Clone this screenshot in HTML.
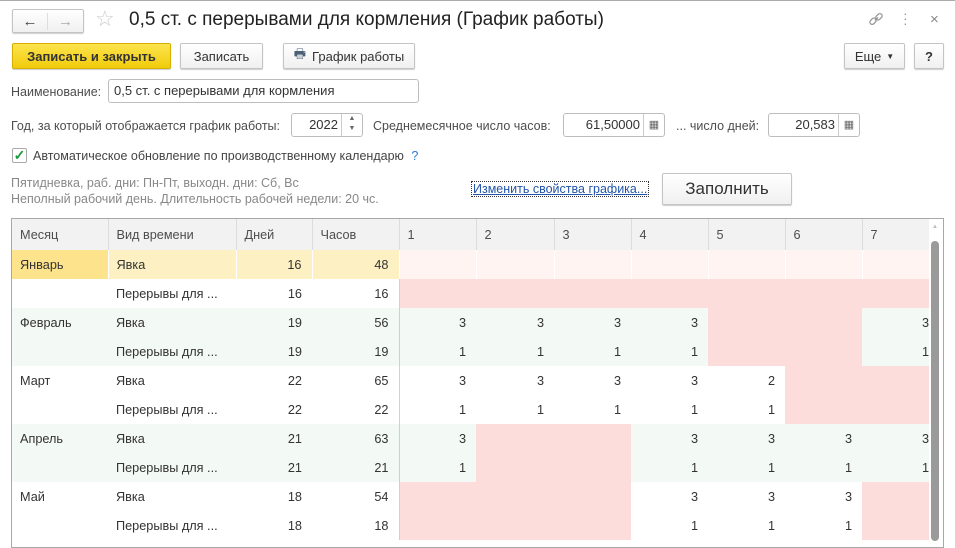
<!DOCTYPE html>
<html><head><meta charset="utf-8"><style>
*{box-sizing:border-box;margin:0;padding:0}
body{width:955px;height:535px;overflow:hidden;background:#fff;font-family:"Liberation Sans",Arial,sans-serif;color:#4d4d4d;font-size:12.5px;position:relative}
.a{position:absolute;white-space:nowrap}
.btn{position:absolute;height:26px;border:1px solid #c4c4c4;border-radius:2px;background:linear-gradient(#fff,#f0f0f0);box-shadow:0 1px 1px rgba(0,0,0,.2);display:flex;align-items:center;justify-content:center;color:#333;font-size:13px}
.inp{position:absolute;height:24px;border:1px solid #bdbdbd;border-radius:3px;background:#fff;color:#333;font-size:13px;line-height:22px}
table{position:absolute;left:12px;top:219px;border-collapse:collapse;table-layout:fixed;font-size:12.7px;color:#333}
td{height:29px;padding:0 8px;white-space:nowrap;overflow:hidden}
th{height:31px;background:#f2f2f2;font-weight:normal;text-align:left;padding:0 8px;border-right:1px solid #dcdcdc;color:#4d4d4d}
.r{text-align:right;padding-right:10px}
.l7{text-align:right;padding-right:0}
.G td{background:#f3f9f5}
.P{background:#fddcdc!important}
.LP{background:#fff4f2!important;border-right:1px solid #fff}
.Y{background:#fdf1c3!important;border-right:1px solid #fff}
.YM{background:#fde38c!important;border-right:1px solid #fff}
.d{border-left:1px solid #d0d0d0}
</style></head><body>
<div class="a" style="left:0;top:0;width:955px;height:1px;background:#aaa"></div>
<div class="btn" style="left:12px;top:9px;width:72px;height:24px;padding:0"><span style="width:35px;text-align:center;font-size:15px;color:#444;border-right:1px solid #ddd">&#8592;</span><span style="width:35px;text-align:center;font-size:15px;color:#aaa">&#8594;</span></div>
<div class="a" style="left:95px;top:6px;font-size:22px;color:#ccc">☆</div>
<div class="a" style="left:129px;top:9px;font-size:19px;color:#222">0,5 ст. с перерывами для кормления (График работы)</div>
<svg class="a" style="left:868px;top:11px" width="16" height="16" viewBox="0 0 16 16" fill="none" stroke="#999" stroke-width="1.3"><path d="M7 9.5l3-3"/><rect x="1.5" y="8" width="7" height="4.5" rx="2.2" transform="rotate(-45 5 10.2)"/><rect x="7.5" y="3.5" width="7" height="4.5" rx="2.2" transform="rotate(-45 11 5.8)"/></svg>
<div class="a" style="left:903px;top:11px;font-size:14px;color:#999;line-height:5px">·<br>·<br>·</div>
<div class="a" style="left:930px;top:11px;font-size:15px;color:#888">×</div>
<div class="btn" style="left:12px;top:43px;width:159px;background:linear-gradient(#fce44d,#f1cc0b);border-color:#d5b000;font-weight:bold;color:#333">Записать и закрыть</div>
<div class="btn" style="left:180px;top:43px;width:83px">Записать</div>
<div class="btn" style="left:283px;top:43px;width:132px"><span style="color:#4a6075;margin-right:6px">&#128438;</span>График работы</div>
<div class="btn" style="left:844px;top:43px;width:61px">Еще <span style="font-size:8px;margin-left:5px">▼</span></div>
<div class="btn" style="left:914px;top:43px;width:30px;font-weight:bold">?</div>
<div class="a" style="left:11px;top:85px">Наименование:</div>
<div class="inp" style="left:108px;top:79px;width:311px;padding-left:5px">0,5 ст. с перерывами для кормления</div>
<div class="a" style="left:11px;top:119px">Год, за который отображается график работы:</div>
<div class="inp" style="left:291px;top:113px;width:72px;text-align:right;padding-right:24px">2022<span style="position:absolute;right:0;top:0;width:21px;height:22px;border-left:1px solid #ccc;font-size:7px;line-height:10px;text-align:center;color:#666">▲<br>▼</span></div>
<div class="a" style="left:373px;top:119px">Среднемесячное число часов:</div>
<div class="inp" style="left:563px;top:113px;width:102px;text-align:right;padding-right:24px">61,50000<span style="position:absolute;right:0;top:0;width:21px;height:22px;border-left:1px solid #ccc;font-size:11px;text-align:center;color:#666">▦</span></div>
<div class="a" style="left:676px;top:119px">... число дней:</div>
<div class="inp" style="left:768px;top:113px;width:92px;text-align:right;padding-right:24px">20,583<span style="position:absolute;right:0;top:0;width:21px;height:22px;border-left:1px solid #ccc;font-size:11px;text-align:center;color:#666">▦</span></div>
<div class="a" style="left:12px;top:148px;width:15px;height:15px;border:1px solid #aaa;border-radius:2px;background:#fff;color:#1a9a3a;font-weight:bold;font-size:14px;line-height:13px;text-align:center">✓</div>
<div class="a" style="left:33px;top:149px;color:#444">Автоматическое обновление по производственному календарю <span style="color:#2b7bd6;margin-left:4px">?</span></div>
<div class="a" style="left:11px;top:175px;color:#888;line-height:16px">Пятидневка, раб. дни: Пн-Пт, выходн. дни: Сб, Вс<br>Неполный рабочий день. Длительность рабочей недели: 20 чс.</div>
<div class="a" style="left:472px;top:182px;color:#2255aa;text-decoration:underline;outline:1px dotted #333;padding:0 1px">Изменить свойства графика...</div>
<div class="btn" style="left:662px;top:173px;width:130px;height:32px;font-size:17px">Заполнить</div>
<div class="a" style="left:11px;top:218px;width:933px;height:330px;border:1px solid #a8a8a8"></div>
<table>
<colgroup><col style="width:96px"><col style="width:128px"><col style="width:76px"><col style="width:87px"><col style="width:77px"><col style="width:78px"><col style="width:77px"><col style="width:77px"><col style="width:77px"><col style="width:77px"><col style="width:67px"></colgroup>
<tr><th>Месяц</th><th>Вид времени</th><th>Дней</th><th>Часов</th><th class="d">1</th><th>2</th><th>3</th><th>4</th><th>5</th><th>6</th><th>7</th></tr>
<tr><td class="YM">Январь</td><td class="Y">Явка</td><td class="Y r">16</td><td class="Y r">48</td><td class="LP d"></td><td class="LP"></td><td class="LP"></td><td class="LP"></td><td class="LP"></td><td class="LP"></td><td class="LP"></td></tr>
<tr><td></td><td>Перерывы для ...</td><td class="r">16</td><td class="r">16</td><td class="P d"></td><td class="P"></td><td class="P"></td><td class="P"></td><td class="P"></td><td class="P"></td><td class="P"></td></tr>
<tr class="G"><td>Февраль</td><td>Явка</td><td class="r">19</td><td class="r">56</td><td class="r d">3</td><td class="r">3</td><td class="r">3</td><td class="r">3</td><td class="P"></td><td class="P"></td><td class="l7">3</td></tr>
<tr class="G"><td></td><td>Перерывы для ...</td><td class="r">19</td><td class="r">19</td><td class="r d">1</td><td class="r">1</td><td class="r">1</td><td class="r">1</td><td class="P"></td><td class="P"></td><td class="l7">1</td></tr>
<tr><td>Март</td><td>Явка</td><td class="r">22</td><td class="r">65</td><td class="r d">3</td><td class="r">3</td><td class="r">3</td><td class="r">3</td><td class="r">2</td><td class="P"></td><td class="P"></td></tr>
<tr><td></td><td>Перерывы для ...</td><td class="r">22</td><td class="r">22</td><td class="r d">1</td><td class="r">1</td><td class="r">1</td><td class="r">1</td><td class="r">1</td><td class="P"></td><td class="P"></td></tr>
<tr class="G"><td>Апрель</td><td>Явка</td><td class="r">21</td><td class="r">63</td><td class="r d">3</td><td class="P"></td><td class="P"></td><td class="r">3</td><td class="r">3</td><td class="r">3</td><td class="l7">3</td></tr>
<tr class="G"><td></td><td>Перерывы для ...</td><td class="r">21</td><td class="r">21</td><td class="r d">1</td><td class="P"></td><td class="P"></td><td class="r">1</td><td class="r">1</td><td class="r">1</td><td class="l7">1</td></tr>
<tr><td>Май</td><td>Явка</td><td class="r">18</td><td class="r">54</td><td class="P d"></td><td class="P"></td><td class="P"></td><td class="r">3</td><td class="r">3</td><td class="r">3</td><td class="P"></td></tr>
<tr><td></td><td>Перерывы для ...</td><td class="r">18</td><td class="r">18</td><td class="P d"></td><td class="P"></td><td class="P"></td><td class="r">1</td><td class="r">1</td><td class="r">1</td><td class="P"></td></tr>
</table>
<div class="a" style="left:929px;top:219px;width:14px;height:316px;background:#fff"></div>
<div class="a" style="left:932px;top:224px;font-size:6px;color:#bbb">▲</div>
<div class="a" style="left:931px;top:241px;width:8px;height:300px;background:#9a9a9a;border-radius:4px"></div>
</body></html>
